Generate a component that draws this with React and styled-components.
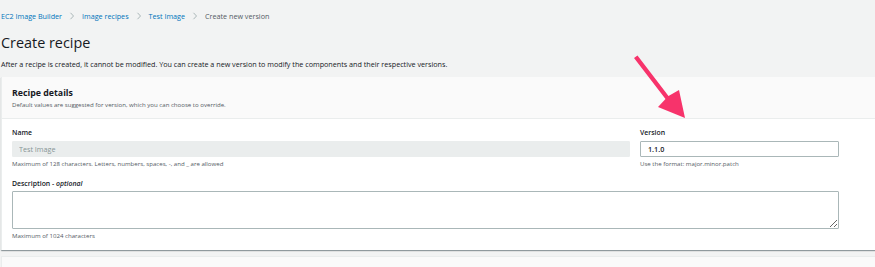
import React from 'react';
import styled, { createGlobalStyle } from 'styled-components';

const GlobalStyle = createGlobalStyle`
  html, body {
    margin: 0;
    padding: 0;
    background: #f2f3f3;
    overflow: hidden;
  }
  body {
    font-family: 'Open Sans', 'Liberation Sans', sans-serif;
    color: #16191f;
  }
`;

const Page = styled.div`
  position: relative;
  width: 875px;
  height: 267px;
  padding-left: 1px;
  box-sizing: border-box;
  overflow: hidden;
`;

const Breadcrumbs = styled.nav`
  display: flex;
  align-items: center;
  height: 12px;
  padding-top: 10px;
  font-size: 7.2px;
  line-height: 12px;
`;

const Crumb = styled.span`
  color: ${(p) => (p.$current ? '#545b64' : '#0073bb')};
`;

const Chevron = styled.svg`
  width: 6px;
  height: 8px;
  margin: 0 7px 0 7px;
`;

const Title = styled.h1`
  margin: 11px 0 0;
  font-size: 14.4px;
  font-weight: 400;
  line-height: 20px;
`;

const Lead = styled.p`
  margin: 6px 0 0;
  font-size: 7.2px;
  line-height: 10px;
`;

const Card = styled.section`
  margin-top: 8px;
  width: 900px;
  background: #fff;
  border-left: 1px solid #eaeded;
  box-shadow: 0 1px 1px 0 rgba(0, 28, 36, 0.3), 1px 1px 1px 0 rgba(0, 28, 36, 0.15);
`;

const CardHeader = styled.header`
  height: 42px;
  box-sizing: border-box;
  padding: 10px 10px 0;
  background: #fafafa;
  border-bottom: 1px solid #eaeded;
`;

const CardTitle = styled.h2`
  margin: 0;
  font-size: 8.8px;
  font-weight: 700;
  line-height: 12px;
`;

const CardSub = styled.div`
  margin-top: 1px;
  font-size: 6.1px;
  line-height: 9px;
  color: #545b64;
`;

const CardBody = styled.div`
  width: 827px;
  padding: 9px 10px 10px;
  display: flex;
  flex-direction: column;
  gap: 11px;
`;

const Row = styled.div`
  display: grid;
  grid-template-columns: 618px 199px;
  column-gap: 10px;
`;

const Field = styled.div`
  display: flex;
  flex-direction: column;
`;

const Label = styled.label`
  font-size: 6.9px;
  font-weight: 600;
  line-height: 10px;
  margin-bottom: ${(p) => p.$gap || 3}px;
  em {
    font-style: italic;
    font-weight: 600;
  }
`;

const Input = styled.input`
  box-sizing: border-box;
  height: 16px;
  width: 100%;
  padding: 0 ${(p) => (p.disabled ? 6 : 7)}px;
  font-family: inherit;
  font-size: 7.2px;
  font-weight: ${(p) => (p.disabled ? 400 : 600)};
  color: ${(p) => (p.disabled ? '#879596' : '#16191f')};
  -webkit-text-fill-color: ${(p) => (p.disabled ? '#879596' : '#16191f')};
  background: ${(p) => (p.disabled ? '#eaeded' : '#fff')};
  border: 1px solid ${(p) => (p.disabled ? '#eaeded' : '#aab7b8')};
  border-radius: 1px;
  outline: none;
  opacity: 1;
`;

const TextArea = styled.textarea`
  box-sizing: border-box;
  height: 38px;
  width: 100%;
  border: 1px solid #aab7b8;
  border-radius: 1px;
  font-family: inherit;
  background: #fff;
  display: block;
  resize: vertical;
`;

const Hint = styled.div`
  margin-top: 2px;
  font-size: 6.1px;
  line-height: 9px;
  color: #545b64;
`;

const NextCard = styled.div`
  margin-top: 6px;
  width: 900px;
  height: 20px;
  background: #fafafa;
  border-top: 1px solid #eaeded;
  border-left: 1px solid #eaeded;
`;

const Arrow = styled.svg`
  position: absolute;
  left: 630px;
  top: 52px;
  width: 62px;
  height: 72px;
  pointer-events: none;
`;

const ChevronIcon = () => (
  <Chevron viewBox="0 0 6 8">
    <path d="M1.5 0.8 L4.5 4 L1.5 7.2" fill="none" stroke="#aab7b8" strokeWidth="1" />
  </Chevron>
);

export default function App() {
  return (
    <Page>
      <GlobalStyle />
      <Breadcrumbs>
        <Crumb>EC2 Image Builder</Crumb>
        <ChevronIcon />
        <Crumb>Image recipes</Crumb>
        <ChevronIcon />
        <Crumb>Test Image</Crumb>
        <ChevronIcon />
        <Crumb $current>Create new version</Crumb>
      </Breadcrumbs>
      <Title>Create recipe</Title>
      <Lead>
        After a recipe is created, it cannot be modified. You can create a new version to modify the components and their respective versions.
      </Lead>
      <Card>
        <CardHeader>
          <CardTitle>Recipe details</CardTitle>
          <CardSub>Default values are suggested for version, which you can choose to override.</CardSub>
        </CardHeader>
        <CardBody>
          <Row>
            <Field>
              <Label>Name</Label>
              <Input disabled value="Test Image" readOnly />
              <Hint>Maximum of 128 characters. Letters, numbers, spaces, -, and _ are allowed</Hint>
            </Field>
            <Field>
              <Label>Version</Label>
              <Input value="1.1.0" readOnly />
              <Hint>Use the format: major.minor.patch</Hint>
            </Field>
          </Row>
          <Field>
            <Label $gap={2}>
              Description - <em>optional</em>
            </Label>
            <TextArea />
            <Hint>Maximum of 1024 characters</Hint>
          </Field>
        </CardBody>
      </Card>
      <NextCard />
      <Arrow viewBox="630 52 62 72">
        <path
          d="M634 58 L637.5 55.5 L668.5 96 L679 90 L685 118 L658 107 L665.5 99 Z"
          fill="#f7336b"
        />
      </Arrow>
    </Page>
  );
}
